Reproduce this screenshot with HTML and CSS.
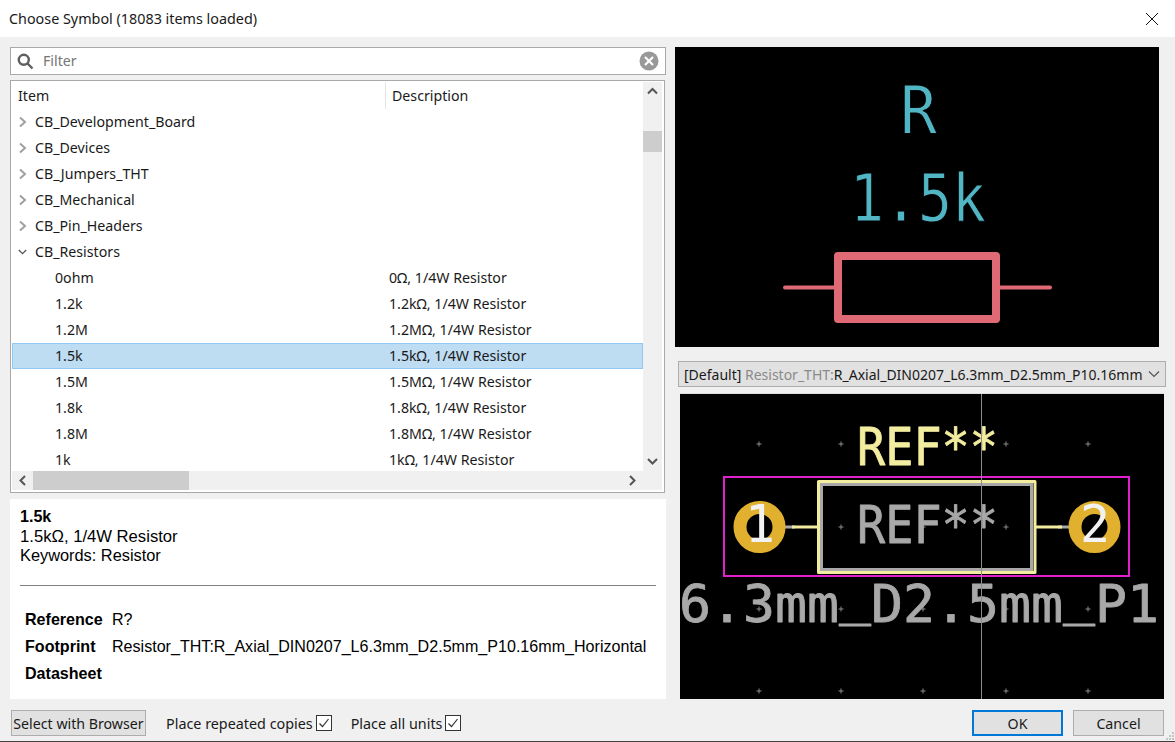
FILE: index.html
```html
<!doctype html>
<html lang="en-us">
<head>
<meta charset="utf-8">
<title>Choose Symbol</title>
<link rel="stylesheet" href="styles.css">
</head>
<body>
<div class="dialog">
  <div class="titlebar">
    <span>Choose Symbol (18083 items loaded)</span>
    <svg class="close" width="12" height="12" viewBox="0 0 12 12"><path d="M0 0L12 12M12 0L0 12"/></svg>
  </div>

  <div class="main">
    <div class="left">
      <div class="filter">
        <svg class="search" width="17" height="17" viewBox="0 0 17 17"><circle cx="6.8" cy="6.8" r="5"/><path d="M10.500 10.500L15.500 15.500"/></svg>
        <span class="filter-text">Filter</span>
        <svg class="clear" width="20" height="20" viewBox="0 0 20 20"><circle cx="10" cy="10" r="9.500"/><path d="M6 6L14 14M14 6L6 14"/></svg>
      </div>

      <div class="tree">
        <div class="tree-top">
          <div class="rows">
            <div class="head"><span class="head-item">Item</span><span class="head-desc">Description</span></div>
            <div class="row"><div class="c1 group"><svg class="tw" width="9" height="12" viewBox="0 0 9 12"><path d="M2 1.500L7 6L2 10.500"/></svg>CB_Development_Board</div></div>
            <div class="row"><div class="c1 group"><svg class="tw" width="9" height="12" viewBox="0 0 9 12"><path d="M2 1.500L7 6L2 10.500"/></svg>CB_Devices</div></div>
            <div class="row"><div class="c1 group"><svg class="tw" width="9" height="12" viewBox="0 0 9 12"><path d="M2 1.500L7 6L2 10.500"/></svg>CB_Jumpers_THT</div></div>
            <div class="row"><div class="c1 group"><svg class="tw" width="9" height="12" viewBox="0 0 9 12"><path d="M2 1.500L7 6L2 10.500"/></svg>CB_Mechanical</div></div>
            <div class="row"><div class="c1 group"><svg class="tw" width="9" height="12" viewBox="0 0 9 12"><path d="M2 1.500L7 6L2 10.500"/></svg>CB_Pin_Headers</div></div>
            <div class="row"><div class="c1 group"><svg class="tw open" width="9" height="12" viewBox="0 0 11 12"><path d="M1 3.500L5.500 8L10 3.500"/></svg>CB_Resistors</div></div>
            <div class="row"><div class="c1 child">0ohm</div><div class="c2">0Ω, 1/4W Resistor</div></div>
            <div class="row"><div class="c1 child">1.2k</div><div class="c2">1.2kΩ, 1/4W Resistor</div></div>
            <div class="row"><div class="c1 child">1.2M</div><div class="c2">1.2MΩ, 1/4W Resistor</div></div>
            <div class="row selected"><div class="c1 child">1.5k</div><div class="c2">1.5kΩ, 1/4W Resistor</div></div>
            <div class="row"><div class="c1 child">1.5M</div><div class="c2">1.5MΩ, 1/4W Resistor</div></div>
            <div class="row"><div class="c1 child">1.8k</div><div class="c2">1.8kΩ, 1/4W Resistor</div></div>
            <div class="row"><div class="c1 child">1.8M</div><div class="c2">1.8MΩ, 1/4W Resistor</div></div>
            <div class="row"><div class="c1 child">1k</div><div class="c2">1kΩ, 1/4W Resistor</div></div>
          </div>
          <div class="vscroll">
            <svg class="arrow" width="19" height="19" viewBox="0 0 19 19"><path d="M5 11.500L9.500 7L14 11.500"/></svg>
            <div class="vthumb"></div>
            <svg class="arrow arrow-end" width="19" height="19" viewBox="0 0 19 19"><path d="M5 7L9.500 11.500L14 7"/></svg>
          </div>
        </div>
        <div class="hscroll">
          <svg class="arrow" width="21" height="19" viewBox="0 0 21 19"><path d="M13 5L8.500 9.500L13 14"/></svg>
          <div class="hthumb"></div>
          <svg class="arrow arrow-right" width="21" height="19" viewBox="0 0 21 19"><path d="M8 5L12.500 9.500L8 14"/></svg>
        </div>
      </div>

      <div class="details">
        <b>1.5k</b>
        <div class="summary-desc">1.5kΩ, 1/4W Resistor</div>
        <div class="summary">Keywords: Resistor</div>
        <hr class="rule">
        <div class="fields">
          <b>Reference</b><span>R?</span>
          <b>Footprint</b><span>Resistor_THT:R_Axial_DIN0207_L6.3mm_D2.5mm_P10.16mm_Horizontal</span>
          <b>Datasheet</b><span></span>
        </div>
      </div>
    </div>

    <div class="right">
      <svg class="preview" width="484" height="300" viewBox="675 47 484 300">
        <g class="sym-text">
          <text x="900" y="133" textLength="37" lengthAdjust="spacingAndGlyphs">R</text>
          <text x="850" y="221" textLength="136" lengthAdjust="spacingAndGlyphs">1.5k</text>
        </g>
        <g class="sym-body">
          <rect x="838" y="256" width="158" height="63"/>
          <path class="sym-lead" d="M785 287.500H835M1000 287.500H1050"/>
        </g>
      </svg>

      <div class="fp-select">
        <span>[Default] <span class="muted">Resistor_THT:</span>R_Axial_DIN0207_L6.3mm_D2.5mm_P10.16mm</span>
        <svg class="select-arrow" width="12" height="8" viewBox="0 0 12 8"><path d="M1 1.500L6 6.500L11 1.500"/></svg>
      </div>

      <svg class="footprint" width="484" height="305" viewBox="680 394 484 305">
        <path class="grid" d="M756.500 444h5M759 441.500v5M838.500 444h5M841 441.500v5M920.500 444h5M923 441.500v5M1003.500 444h5M1006 441.500v5M1085.500 444h5M1088 441.500v5M838.500 527h5M841 524.500v5M920.500 527h5M923 524.500v5M1003.500 527h5M1006 524.500v5M756.500 609h5M759 606.500v5M838.500 609h5M841 606.500v5M920.500 609h5M923 606.500v5M1003.500 609h5M1006 606.500v5M1085.500 609h5M1088 606.500v5M756.500 691h5M759 688.500v5M838.500 691h5M841 688.500v5M920.500 691h5M923 688.500v5M1003.500 691h5M1006 688.500v5M1085.500 691h5M1088 688.500v5"/>
        <rect class="courtyard" x="724" y="477" width="405" height="99"/>
        <path class="lead-fab" d="M785 527H795M1058 527H1069"/>
        <path class="lead-silk" d="M792 527H818M1036 527H1062"/>
        <rect class="silk" x="818.500" y="481.500" width="216.500" height="91"/>
        <rect class="fab" x="821.500" y="484.500" width="210" height="85"/>
        <g class="pad">
          <circle cx="759.500" cy="527" r="19.500"/>
          <circle cx="1094.500" cy="527" r="19.500"/>
        </g>
        <text class="txt-silk" x="857" y="465" textLength="141" lengthAdjust="spacingAndGlyphs">REF**</text>
        <text class="txt-fab" x="857" y="543" textLength="141" lengthAdjust="spacingAndGlyphs">REF**</text>
        <text class="txt-fab" x="679" y="622" textLength="480" lengthAdjust="spacingAndGlyphs">6.3mm<tspan dy="-8">_</tspan><tspan dy="8">D2.5mm</tspan><tspan dy="-8">_</tspan><tspan dy="8">P1</tspan></text>
        <text class="txt-pad" x="745" y="542" textLength="30" lengthAdjust="spacingAndGlyphs">1</text>
        <text class="txt-pad" x="1080" y="542" textLength="30" lengthAdjust="spacingAndGlyphs">2</text>
        <path class="cursor" d="M981.500 394V699"/>
      </svg>
    </div>
  </div>

  <div class="footer">
    <button class="btn btn-browser">Select with Browser</button>
    <label class="check check-first">Place repeated copies<span class="box"><svg width="14" height="14" viewBox="0 0 14 14"><path d="M2.500 7.500L5.500 10.500L11.500 3"/></svg></span></label>
    <label class="check">Place all units<span class="box"><svg width="14" height="14" viewBox="0 0 14 14"><path d="M2.500 7.500L5.500 10.500L11.500 3"/></svg></span></label>
    <div class="spacer"></div>
    <button class="btn btn-ok">OK</button>
    <button class="btn btn-cancel">Cancel</button>
    <svg class="grip" width="9" height="9" viewBox="0 0 9 9"><path d="M6 0h2v2H6zM3 3h2v2H3zM6 3h2v2H6zM0 6h2v2H0zM3 6h2v2H3zM6 6h2v2H6z"/></svg>
  </div>
</div>
</body>
</html>
```

FILE: styles.css
```css
BODY {
  margin: 0;
  padding: 0;
  background: #f0f0f0;
  overflow: hidden;
}
.dialog {
  position: relative;
  width: 1175px;
  height: 742px;
  display: flex;
  flex-direction: column;
  font: 14.200px "Noto Sans", sans-serif;
  color: #1a1a1a;
  box-sizing: border-box;
  border-bottom: 1px solid #404040;
}

/* title */
.titlebar {
  height: 37px;
  flex: none;
  background: #fff;
  display: flex;
  align-items: center;
  padding: 0 17px 0 9px;
  justify-content: space-between;
  font-size: 14.350px;
}
.close path {
  stroke: #111;
  fill: none;
}

.main {
  display: flex;
  height: 662px;
  flex: none;
  padding: 10px 0 0 10px;
  box-sizing: border-box;
}
.left {
  width: 656px;
  display: flex;
  flex-direction: column;
}
.right {
  margin-left: 9px;
  width: 491px;
}

/* filter */
.filter {
  height: 28px;
  flex: none;
  box-sizing: border-box;
  border: 1px solid #a9a9a9;
  background: #fff;
  display: flex;
  align-items: center;
  padding: 0 6px 0 6px;
}
.search {
  flex: none;
}
.search circle, .search path {
  fill: none;
  stroke: #5f5f5f;
  stroke-width: 2.400;
}
.filter-text {
  margin-left: 9px;
  padding-bottom: 2px;
  color: #767676;
  flex: 1;
}
.clear circle {
  fill: #999;
}
.clear path {
  stroke: #fff;
  stroke-width: 2.200;
}

/* tree */
.tree {
  width: 655px;
  height: 413px;
  flex: none;
  margin-top: 5px;
  box-sizing: border-box;
  border: 1px solid #a9a9a9;
  background: #fff;
  padding: 1px 2px 2px 1px;
  display: flex;
  flex-direction: column;
}
.tree-top {
  display: flex;
  height: 389px;
  flex: none;
}
.rows {
  flex: 1;
  overflow: hidden;
}
.head {
  height: 27px;
  display: flex;
  align-items: center;
}
.head-item {
  width: 367px;
  padding-left: 6px;
  height: 27px;
  line-height: 27px;
  border-right: 1px solid #e5e5e5;
}
.head-desc {
  padding-left: 6px;
}
.row {
  height: 26px;
  line-height: 26px;
  display: flex;
  box-sizing: border-box;
  white-space: nowrap;
}
.selected {
  background: #bedcf2;
  box-shadow: inset 0 0 0 1px #90c8f6;
}
.c1 {
  width: 377px;
  flex: none;
}
.group {
  display: flex;
  align-items: center;
  padding-left: 6px;
}
.child {
  padding-left: 43px;
  width: 334px;
}
.tw {
  margin-right: 8px;
  flex: none;
  width: 9px;
}
.tw path {
  fill: none;
  stroke: #a0a0a0;
  stroke-width: 2;
}
.tw.open path {
  stroke: #555;
  stroke-width: 1.600;
}

/* scrollbars */
.vscroll {
  width: 19px;
  flex: none;
  background: #f0f0f0;
  display: flex;
  flex-direction: column;
}
.vthumb {
  height: 21px;
  margin-top: 30px;
  background: #cdcdcd;
}
.arrow path {
  fill: none;
  stroke: #555;
  stroke-width: 2;
}
.arrow-end {
  margin-top: auto;
}
.arrow-right {
  margin-left: auto;
}
.hscroll {
  height: 19px;
  flex: none;
  background: #f0f0f0;
  display: flex;
  align-items: center;
  padding-right: 19px;
}
.hthumb {
  width: 156px;
  height: 19px;
  background: #cdcdcd;
}

/* details */
.details {
  margin-top: 6px;
  height: 200px;
  flex: none;
  box-sizing: border-box;
  background: #fff;
  padding: 8px 10px 0 10px;
  font: 16.090px/19.500px "Liberation Sans", Arial, sans-serif;
  color: #000;
}
.summary-desc {
  font-size: 16.650px;
}
.summary {
  font-size: 16.350px;
}
.rule {
  border: 0;
  border-top: 1px solid #808080;
  margin: 19px 0 0 0;
}
.fields {
  display: grid;
  grid-template-columns: 87px 1fr;
  grid-auto-rows: 27px;
  align-items: center;
  padding: 21px 0 0 5px;
  white-space: nowrap;
}

/* previews */
.preview, .footprint {
  display: block;
  background: #000;
}
.footprint {
  margin-left: 5px;
  margin-top: 6px;
  border-top: 1px solid #ddd;
}
.sym-text text {
  font: 400 66px "DejaVu Sans Mono", monospace;
  fill: #52b5c4;
  stroke: #000;
  stroke-width: 0.800;
}
.sym-body rect {
  fill: none;
  stroke: #df6a75;
  stroke-width: 8;
  stroke-linejoin: round;
}
.sym-lead {
  stroke: #df6a75;
  stroke-width: 4;
  stroke-linecap: round;
  fill: none;
}
.fp-select {
  margin: 14px 0 0 3px;
  width: 488px;
  height: 26px;
  box-sizing: border-box;
  border: 1px solid #adadad;
  background: #e1e1e1;
  display: flex;
  align-items: center;
  justify-content: space-between;
  padding: 0 5px;
  white-space: nowrap;
  font-size: 14px;
}
.muted {
  color: #8a8a8a;
}
.select-arrow path {
  fill: none;
  stroke: #555;
  stroke-width: 1.200;
}
.grid {
  stroke: #8c8c8c;
  fill: none;
}
.courtyard {
  fill: none;
  stroke: #e020cc;
  stroke-width: 2;
}
.silk {
  fill: none;
  stroke: #f3eda0;
  stroke-width: 3;
  stroke-linejoin: round;
}
.fab {
  fill: none;
  stroke: #a8a8a8;
  stroke-width: 3;
}
.lead-fab, .lead-silk {
  fill: none;
  stroke-width: 3;
}
.lead-fab {
  stroke: #a8a8a8;
}
.lead-silk {
  stroke: #f3eda0;
}
.pad circle {
  fill: none;
  stroke: #e0b02e;
  stroke-width: 13;
}
.txt-silk, .txt-fab, .txt-pad {
  font: 400 51px "DejaVu Sans Mono", monospace;
  stroke-width: 0.800;
  stroke-linejoin: round;
}
.txt-silk {
  fill: #f3eda0;
  stroke: #f3eda0;
}
.txt-fab {
  fill: #a8a8a8;
  stroke: #a8a8a8;
}
.txt-pad {
  fill: #f2f2f2;
  stroke: none;
}
.cursor {
  stroke: #8c8c8c;
  fill: none;
}

/* footer */
.footer {
  flex: 1;
  display: flex;
  align-items: flex-start;
  padding: 11px 11px 0 11px;
}
.btn {
  height: 26px;
  box-sizing: border-box;
  border: 1px solid #adadad;
  background: #e1e1e1;
  font: 14.200px "Noto Sans", sans-serif;
  color: #1a1a1a;
  padding: 0;
}
.btn-browser {
  width: 135px;
}
.btn-ok {
  width: 91px;
  border: 2px solid #0078d7;
}
.btn-cancel {
  width: 91px;
  margin-left: 10px;
}
.check {
  display: flex;
  align-items: center;
  height: 26px;
  margin-left: 19px;
  font-size: 14.350px;
}
.check-first {
  margin-left: 20px;
}
.box {
  width: 16px;
  height: 16px;
  box-sizing: border-box;
  border: 1px solid #333;
  background: #fff;
  margin-left: 3px;
  display: flex;
  align-items: center;
  justify-content: center;
}
.box path {
  fill: none;
  stroke: #333;
  stroke-width: 1.200;
}
.spacer {
  flex: 1;
}
.grip {
  position: absolute;
  right: 0;
  bottom: 0;
}
.grip path {
  fill: #c4c4c4;
}
```
